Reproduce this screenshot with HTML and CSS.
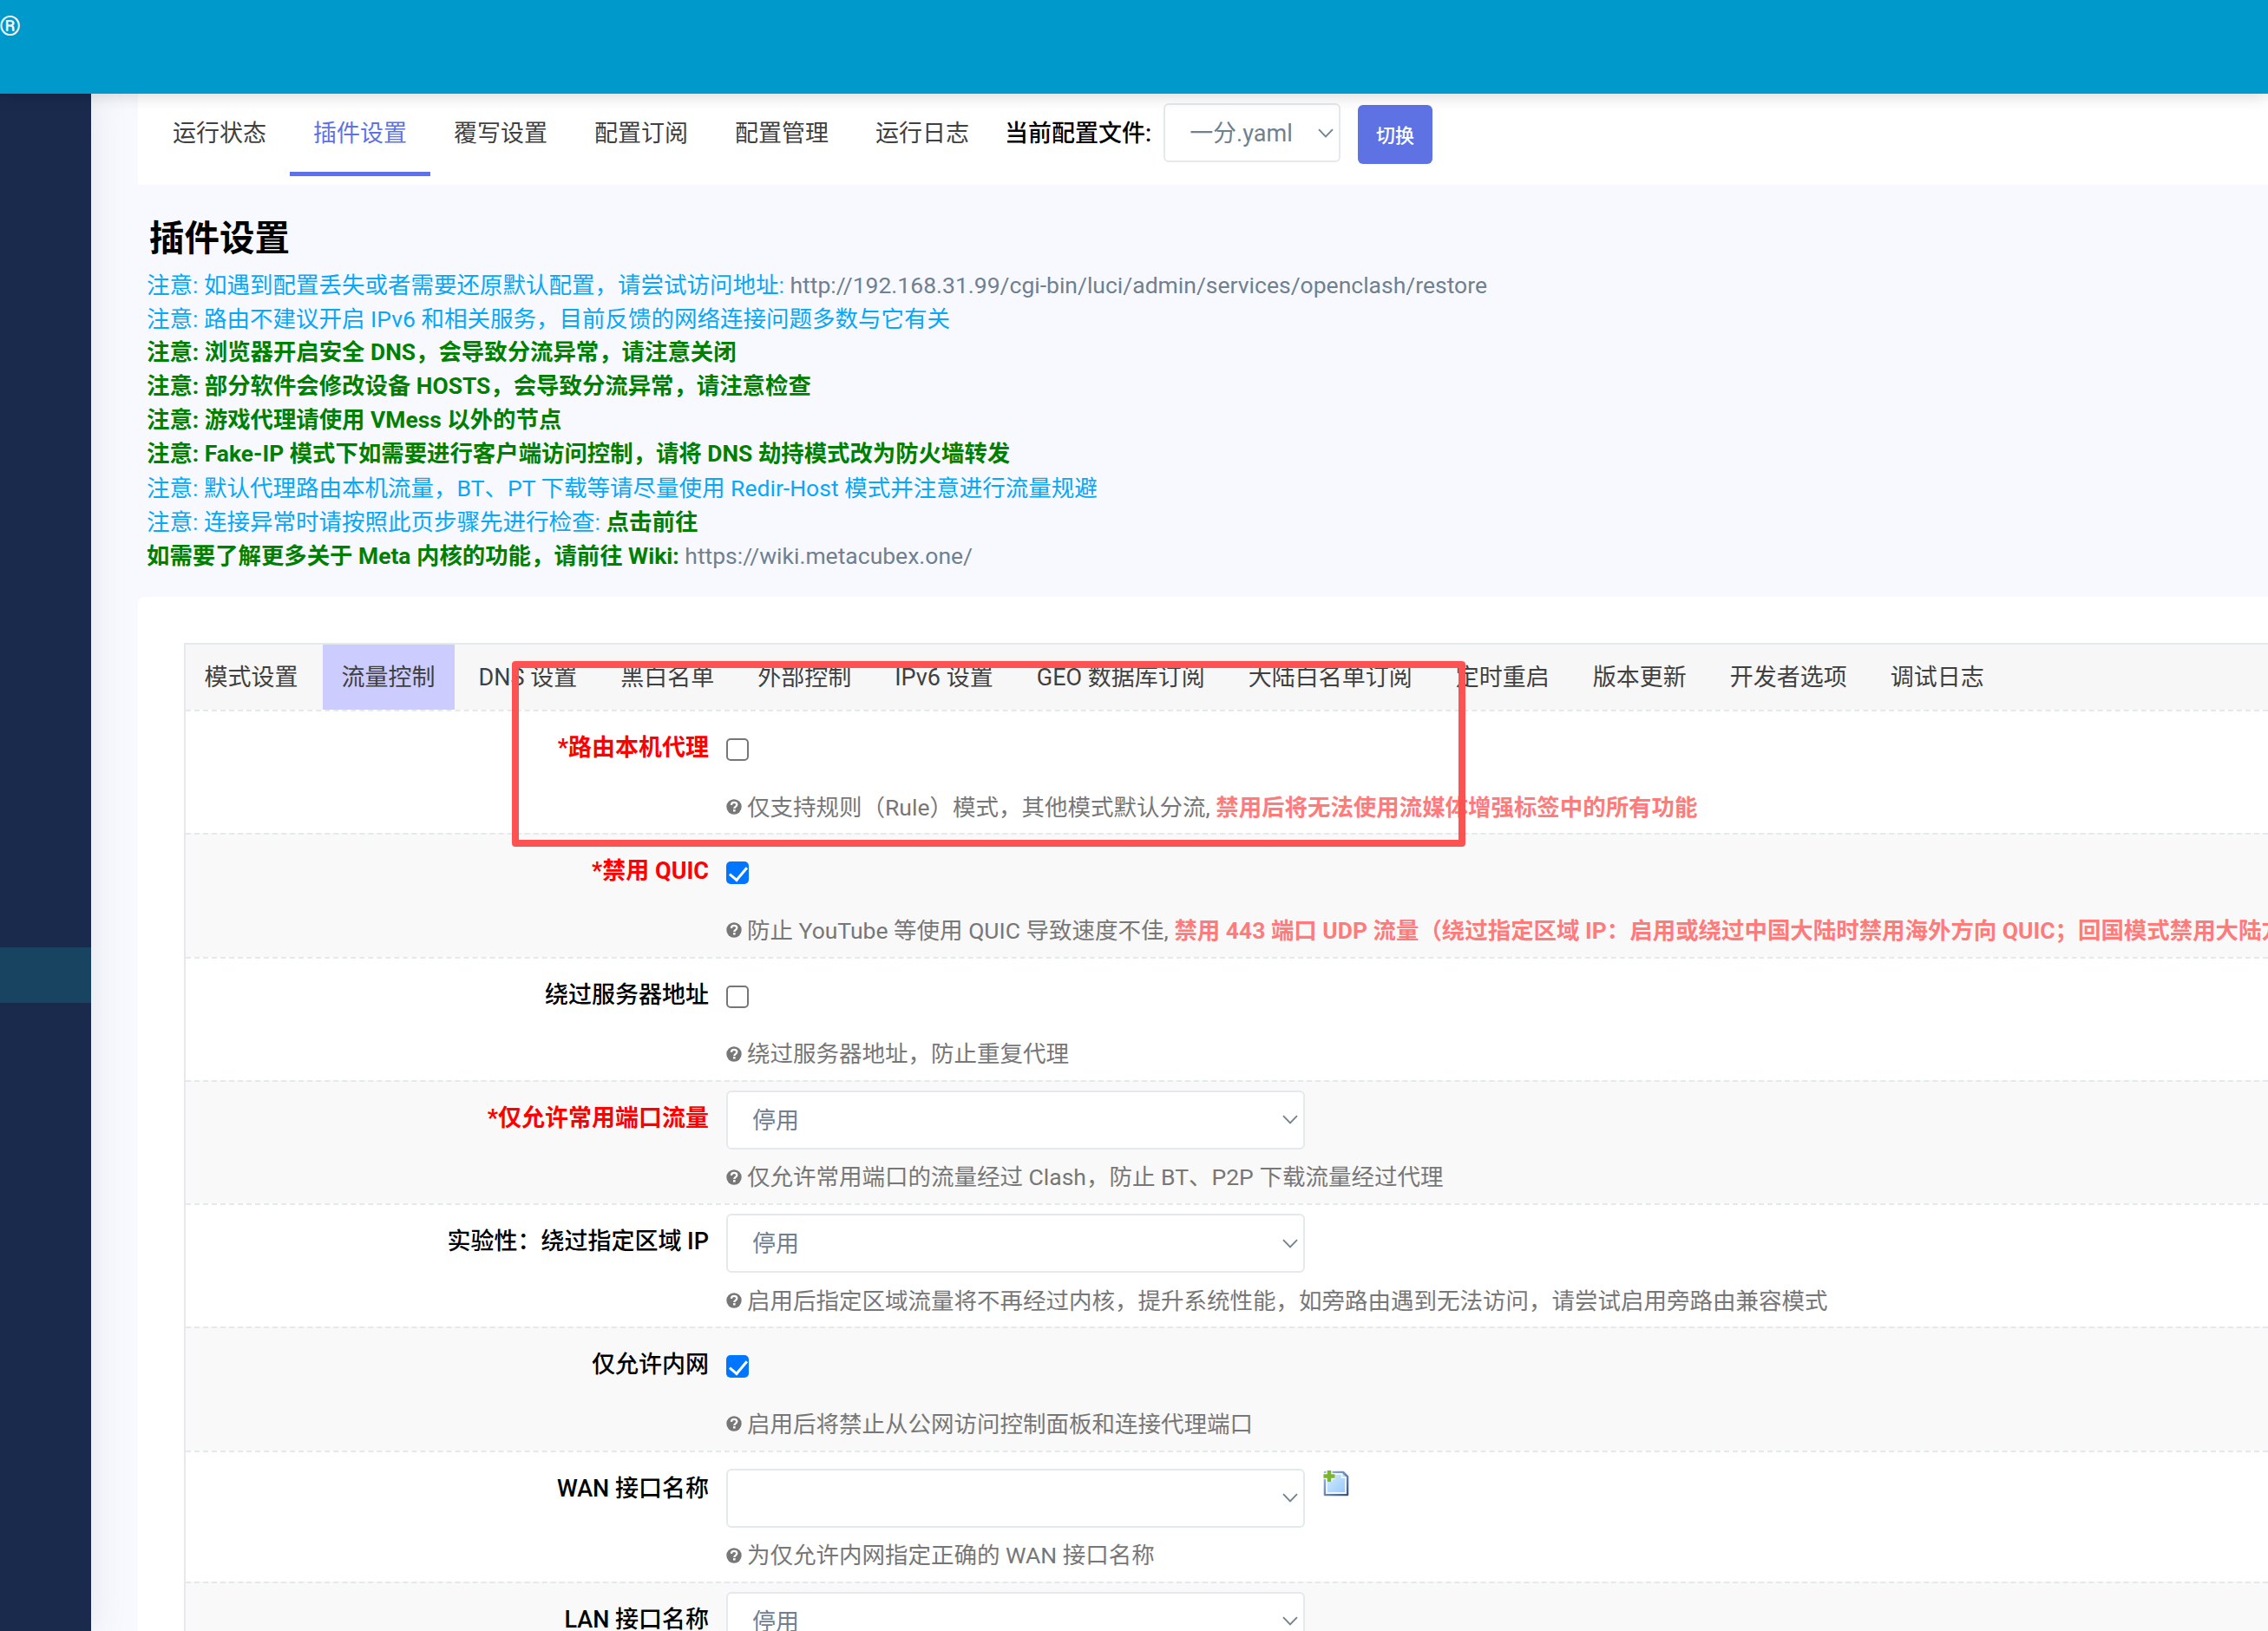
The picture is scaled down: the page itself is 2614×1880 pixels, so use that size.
FILE: index.html
```html
<!DOCTYPE html>
<html lang="zh-CN">
<head>
  <meta charset="UTF-8" />
  <title>OpenClash - 插件设置</title>
  <link rel="stylesheet" href="styles.css">
</head>
<body>
  <svg class="defs" aria-hidden="true">
    <symbol id="arrow" viewBox="0 0 18 11"><path d="M1 1.2 L9 9.4 L17 1.2" fill="none" stroke="#74838f" stroke-width="1.9"/></symbol>
    <symbol id="help" viewBox="0 0 18 18"><circle cx="9" cy="9" r="8.7" fill="#777"/><path d="M5.9 6.9 C6 4.6 7.4 3.8 9.1 3.8 C11 3.8 12.3 5 12.3 6.6 C12.3 8.9 9.3 8.9 9.3 11" fill="none" stroke="#fff" stroke-width="2.3"/><rect x="8" y="12.1" width="2.6" height="2.4" fill="#fff"/></symbol>
  </svg>

  <header class="header"><span class="brand">®</span></header>

  <div class="layout">
    <aside class="sidebar"><div class="sidebar-active"></div></aside>

    <main class="main">
      <nav class="tabs">
        <a class="tab">运行状态</a>
        <a class="tab active">插件设置</a>
        <a class="tab">覆写设置</a>
        <a class="tab">配置订阅</a>
        <a class="tab">配置管理</a>
        <a class="tab">运行日志</a>
        <span class="config-label">当前配置文件:</span>
        <div class="select select-small"><span>一分.yaml</span><svg class="arrow"><use href="#arrow"/></svg></div>
        <button class="btn">切换</button>
      </nav>

      <section class="intro">
        <h2>插件设置</h2>
        <p class="note">注意: 如遇到配置丢失或者需要还原默认配置，请尝试访问地址: <a>http://192.168.31.99/cgi-bin/luci/admin/services/openclash/restore</a></p>
        <p class="note">注意: 路由不建议开启 IPv6 和相关服务，目前反馈的网络连接问题多数与它有关</p>
        <p class="note green">注意: 浏览器开启安全 DNS，会导致分流异常，请注意关闭</p>
        <p class="note green">注意: 部分软件会修改设备 HOSTS，会导致分流异常，请注意检查</p>
        <p class="note green">注意: 游戏代理请使用 VMess 以外的节点</p>
        <p class="note green">注意: Fake-IP 模式下如需要进行客户端访问控制，请将 DNS 劫持模式改为防火墙转发</p>
        <p class="note">注意: 默认代理路由本机流量，BT、PT 下载等请尽量使用 Redir-Host 模式并注意进行流量规避</p>
        <p class="note">注意: 连接异常时请按照此页步骤先进行检查: <b class="green">点击前往</b></p>
        <p class="note green">如需要了解更多关于 Meta 内核的功能，请前往 Wiki: <a>https://wiki.metacubex.one/</a></p>
      </section>

      <section class="panel">
        <div class="table">
          <div class="subtabs">
            <a>模式设置</a>
            <a class="active">流量控制</a>
            <a>DNS 设置</a>
            <a>黑白名单</a>
            <a>外部控制</a>
            <a>IPv6 设置</a>
            <a>GEO 数据库订阅</a>
            <a>大陆白名单订阅</a>
            <a>定时重启</a>
            <a>版本更新</a>
            <a>开发者选项</a>
            <a>调试日志</a>
          </div>

          <div class="row">
            <label class="required">*路由本机代理</label>
            <div class="field">
              <div class="control"><input type="checkbox"></div>
              <div class="help"><svg><use href="#help"/></svg>仅支持规则（Rule）模式，其他模式默认分流, <b>禁用后将无法使用流媒体增强标签中的所有功能</b></div>
            </div>
          </div>
          <div class="row">
            <label class="required">*禁用 QUIC</label>
            <div class="field">
              <div class="control"><input type="checkbox" checked></div>
              <div class="help"><svg><use href="#help"/></svg>防止 YouTube 等使用 QUIC 导致速度不佳, <b>禁用 443 端口 UDP 流量（绕过指定区域 IP：启用或绕过中国大陆时禁用海外方向 QUIC；回国模式禁用大陆方</b></div>
            </div>
          </div>
          <div class="row">
            <label>绕过服务器地址</label>
            <div class="field">
              <div class="control"><input type="checkbox"></div>
              <div class="help"><svg><use href="#help"/></svg>绕过服务器地址，防止重复代理</div>
            </div>
          </div>
          <div class="row">
            <label class="required">*仅允许常用端口流量</label>
            <div class="field">
              <div class="control"><div class="select"><span>停用</span><svg class="arrow"><use href="#arrow"/></svg></div></div>
              <div class="help"><svg><use href="#help"/></svg>仅允许常用端口的流量经过 Clash，防止 BT、P2P 下载流量经过代理</div>
            </div>
          </div>
          <div class="row">
            <label>实验性：绕过指定区域 IP</label>
            <div class="field">
              <div class="control"><div class="select"><span>停用</span><svg class="arrow"><use href="#arrow"/></svg></div></div>
              <div class="help"><svg><use href="#help"/></svg>启用后指定区域流量将不再经过内核，提升系统性能，如旁路由遇到无法访问，请尝试启用旁路由兼容模式</div>
            </div>
          </div>
          <div class="row">
            <label>仅允许内网</label>
            <div class="field">
              <div class="control"><input type="checkbox" checked></div>
              <div class="help"><svg><use href="#help"/></svg>启用后将禁止从公网访问控制面板和连接代理端口</div>
            </div>
          </div>
          <div class="row row-tall">
            <label>WAN 接口名称</label>
            <div class="field">
              <div class="control">
                <div class="select"><span></span><svg class="arrow"><use href="#arrow"/></svg></div>
                <svg class="add" viewBox="0 0 32 32">
                  <defs>
                    <linearGradient id="page" x1="0" y1="0" x2="1" y2="1"><stop offset="0" stop-color="#d9efff"/><stop offset="1" stop-color="#91c6fb"/></linearGradient>
                    <linearGradient id="edge" x1="0" y1="0" x2="1" y2="1"><stop offset="0" stop-color="#9dbbe0"/><stop offset="1" stop-color="#3e547c"/></linearGradient>
                  </defs>
                  <path d="M3 3 H24 L29 8 V29 H3 Z" fill="url(#page)" stroke="url(#edge)" stroke-width="2.6" stroke-linejoin="round"/>
                  <path d="M5 5 H22.5 V9 H27 V27 H5 Z" fill="none" stroke="#eef7ff" stroke-width="1.8"/>
                  <path d="M8 1 V14 M1.5 7.5 H14.5" stroke="#fff" stroke-width="7"/>
                  <path d="M8 1 V14 M1.5 7.5 H14.5" stroke="#78b62c" stroke-width="4.6"/>
                </svg>
              </div>
              <div class="help"><svg><use href="#help"/></svg>为仅允许内网指定正确的 WAN 接口名称</div>
            </div>
          </div>
          <div class="row">
            <label>LAN 接口名称</label>
            <div class="field">
              <div class="control"><div class="select"><span>停用</span><svg class="arrow"><use href="#arrow"/></svg></div></div>
            </div>
          </div>
        </div>
      </section>
    </main>
  </div>

  <div class="highlight"></div>
</body>
</html>
```

FILE: styles.css
```css
* { box-sizing: border-box; }
body {
  margin: 0;
  height: 1880px;
  overflow: hidden;
  position: relative;
  background: #f8f9fe;
  color: #000;
  font-family: Roboto, "Noto Sans CJK SC", sans-serif;
  font-size: 27px;
  white-space: nowrap;
}
.defs { display: none; }

.header { position: relative; z-index: 2; height: 108px; background: #0099cc; box-shadow: 0 0 20px rgba(0,0,0,.2); }
.brand { display: block; padding-top: 12px; margin-left: -1px; color: #fff; font: 500 32px/36px Roboto, sans-serif; }

.layout { display: flex; height: 1772px; }
.sidebar { flex: none; width: 105px; padding-top: 984px; background: #192a4d; box-shadow: 0 0 40px rgba(136,152,170,.2); }
.sidebar-active { height: 64px; background: #184461; }
.main { flex: 1; min-width: 0; padding-left: 54px; }

/* top navigation */
.tabs { display: flex; align-items: flex-start; height: 105px; padding-left: 13px; background: #fff; }
.tab { height: 95px; padding: 26px 27px 0; line-height: 40px; color: #404040; }
.tab.active { color: #5e72e4; border-bottom: 5px solid #5e72e4; }
.config-label { padding: 26px 14px 0; line-height: 40px; font-weight: 500; }

.select {
  display: flex; align-items: center; justify-content: space-between;
  width: 667px; height: 68px; padding: 0 6px 0 28px;
  border: 2px solid #e4e9eb; border-radius: 6px; background: #fff; color: #708090;
}
.select span { padding-bottom: 3px; }
.arrow { width: 18px; height: 11px; }
.select-small { width: 204px; margin-top: 11px; }
.btn {
  width: 86px; height: 68px; margin: 13px 0 0 20px; padding: 0 0 3px;
  border: 0; border-radius: 6px; background: #5e72e4; color: #fff;
  font: 500 22px Roboto, "Noto Sans CJK SC", sans-serif;
}

/* notices */
.intro { height: 475px; padding: 33px 0 0 10px; }
h2 { margin: 0 0 5px 3px; font-size: 40.5px; line-height: 58px; font-weight: 700; }
.note { margin: 0; font-size: 26.5px; line-height: 39px; color: #06a8f8; }
.note a { color: #708090; font-size: 26.5px; font-weight: 400; }
.green, .note.green { color: green; font-weight: 700; }
.note.green { font-size: 26.4px; }

/* settings table */
.panel { height: 1192px; padding: 53px 0 0 53px; background: #fff; border-radius: 8px 0 0; }
.table { border: 2px solid #e4e9eb; border-width: 2px 0 0 2px; }
.subtabs { display: flex; gap: 6px; height: 75px; background: #f7f7f7; }
.subtabs a { padding: 1px 22.5px 0 21.5px; line-height: 75px; color: #404040; }
.subtabs .active { background: #ccccff; }

.row { display: flex; height: 142.3px; border-top: 2px dashed #e4e9eb; }
.row:nth-child(odd) { background: #f9f9f9; }
.row label { flex: none; width: 603px; padding-top: 22px; line-height: 40px; text-align: right; font-weight: 500; }
.row label.required { color: #f00; font-weight: 700; }
.field { flex: 1; min-width: 0; overflow: hidden; padding: 10px 0 0 20px; }
.control { display: flex; height: 80px; }
.row-tall { height: 151px; }
.row-tall .field { padding-top: 19px; }
.help { display: flex; align-items: center; height: 40px; padding-bottom: 4px; font-size: 26.5px; color: #777; white-space: pre; }
.help svg { flex: none; width: 18px; height: 18px; margin: 4px 6px 0 0; }
.help b { color: #ff7b7b; font-size: 26.45px; }
.add { width: 32px; height: 32px; margin: 1px 0 0 20px; }

input[type=checkbox] { appearance: none; width: 26px; height: 26px; margin: 21px 0 0; border: 2px solid #767676; border-radius: 5px; background: #fff; }
input[type=checkbox]:checked { border: 0; background: #0075ff; }
input[type=checkbox]:checked::before {
  content: ""; display: block; width: 9px; height: 17px; margin: 2px 0 0 8px;
  border: solid #fff; border-width: 0 3.5px 3.5px 0; transform: rotate(40deg);
}

/* annotation frame over the table */
.highlight { position: absolute; z-index: 3; left: 590px; top: 762px; width: 1099px; height: 214px; border: 8px solid #fc5252; border-radius: 4px; }
```
